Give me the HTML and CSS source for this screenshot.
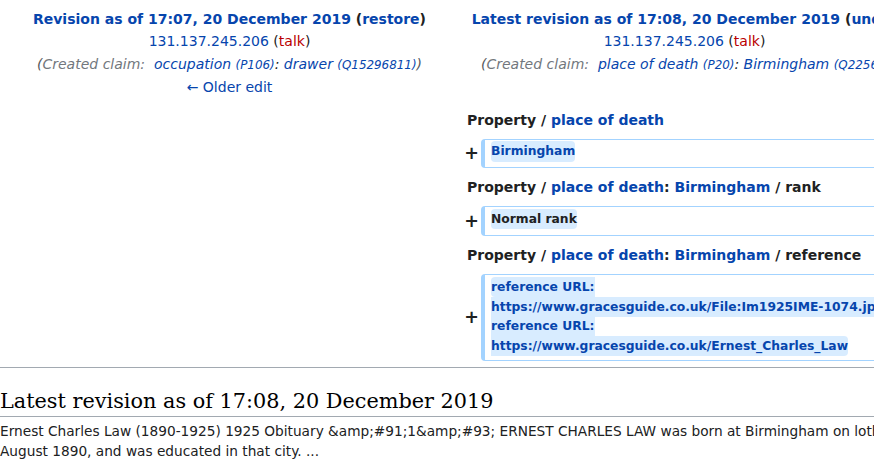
FILE: index.html
```html
<!DOCTYPE html>
<html lang="en">
<head>
<meta charset="utf-8">
<title>Diff</title>
<link rel="stylesheet" href="styles.css">
</head>
<body>
<div class="page">
  <div class="diff">
    <div class="title title-old">
      <div class="title-line"><strong><a href="#">Revision as of 17:07, 20 December 2019</a> <span class="paren">(<a href="#">restore</a>)</span></strong></div>
      <div class="title-line"><a href="#">131.137.245.206</a> <span class="paren">(<a class="new" href="#">talk</a>)</span></div>
      <div class="title-line comment"><span class="paren">(</span><span class="autocomment">Created claim:&nbsp; </span><a href="#">occupation <span class="eid">(P106)</span></a>: <a href="#">drawer <span class="eid">(Q15296811)</span></a><span class="paren">)</span></div>
      <div class="title-line"><a href="#">← Older edit</a></div>
    </div>
    <div class="title title-new">
      <div class="title-line"><strong><a href="#">Latest revision as of 17:08, 20 December 2019</a> <span class="paren">(<a href="#">undo</a>)</span></strong></div>
      <div class="title-line"><a href="#">131.137.245.206</a> <span class="paren">(<a class="new" href="#">talk</a>)</span></div>
      <div class="title-line comment"><span class="paren">(</span><span class="autocomment">Created claim:&nbsp; </span><a href="#">place of death <span class="eid">(P20)</span></a>: <a href="#">Birmingham <span class="eid">(Q2256)</span></a><span class="paren">)</span></div>
    </div>

    <div class="lineno-empty"></div>
    <div class="lineno">Property / <a href="#">place of death</a></div>

    <div class="empty"></div>
    <div class="marker">+</div>
    <div class="added"><div class="added-text"><ins class="change"><a href="#">Birmingham</a></ins></div></div>

    <div class="lineno-empty"></div>
    <div class="lineno">Property / <a href="#">place of death</a>: <a href="#">Birmingham</a> / rank</div>

    <div class="empty"></div>
    <div class="marker">+</div>
    <div class="added"><div class="added-text"><ins class="change">Normal rank</ins></div></div>

    <div class="lineno-empty"></div>
    <div class="lineno">Property / <a href="#">place of death</a>: <a href="#">Birmingham</a> / reference</div>

    <div class="empty"></div>
    <div class="marker">+</div>
    <div class="added"><div class="added-text"><ins class="change link">reference URL: https://www.gracesguide.co.uk/File:Im1925IME-1074.jpg<br>reference URL: https://www.gracesguide.co.uk/Ernest_Charles_Law</ins></div></div>
  </div>

  <hr class="diff-hr">

  <h2 class="current-title">Latest revision as of 17:08, 20 December 2019</h2>
  <p class="summary">Ernest Charles Law (1890-1925) 1925 Obituary &amp;amp;#91;1&amp;amp;#93; ERNEST CHARLES LAW was born at Birmingham on loth August 1890, and was educated in that city. ...</p>
</div>
</body>
</html>
```

FILE: styles.css
```css
html, body {
  margin: 0;
  padding: 0;
  overflow: hidden;
  background: #ffffff;
}

body {
  font-family: "DejaVu Sans", sans-serif;
  font-size: 14px;
  color: #202122;
}

.page {
  width: 914px;
}

a {
  color: #0645ad;
  text-decoration: none;
}

a.new {
  color: #ba0000;
}

.diff {
  display: grid;
  grid-template-columns: 18px 429px 18px 429px;
  gap: 4px;
  padding: 4px;
}

.title {
  grid-column: span 2;
  text-align: center;
  padding: 4px 0 2px;
  line-height: 22.4px;
  white-space: nowrap;
}

.paren {
  color: #202122;
}

.comment {
  font-style: italic;
}

.comment .paren {
  color: #54595d;
}

.autocomment {
  color: #72777d;
}

.eid {
  font-size: 0.85em;
}

.lineno-empty,
.empty {
  grid-column: span 2;
}

.lineno {
  grid-column: span 2;
  font-weight: bold;
  line-height: 22.4px;
  padding: 4px 0 3.5px 8px;
  white-space: nowrap;
}

.marker {
  display: flex;
  align-items: center;
  justify-content: flex-end;
  font-weight: bold;
  font-size: 17.5px;
  line-height: 1.2;
  padding: 4.4px 0;
  margin-right: -2px;
}

.added {
  border: 1px solid #a3d3ff;
  border-left-width: 4px;
  border-radius: 0.33em;
  padding: 3px 0;
  font-size: 12.32px;
  line-height: 1.6;
}

.added-text {
  padding: 0 6px;
}

.change {
  text-decoration: none;
  font-weight: bold;
  background: #d8ecff;
  border-radius: 0.33em;
  padding: 0.25em 0;
  color: #202122;
}

.change.link {
  color: #0645ad;
}

.diff-hr {
  border: 0;
  height: 1px;
  background: #a2a9b1;
  margin: 2px 0 0;
}

.current-title {
  font-family: "DejaVu Serif", serif;
  font-weight: normal;
  font-size: 20.8px;
  line-height: 1.3;
  margin: 20px 0 0;
  padding: 0 0 1px;
  border-bottom: 1px solid #a2a9b1;
  color: #000000;
}

.summary {
  margin: 4px 0 0;
  font-size: 13.7px;
  line-height: 20px;
}
```
